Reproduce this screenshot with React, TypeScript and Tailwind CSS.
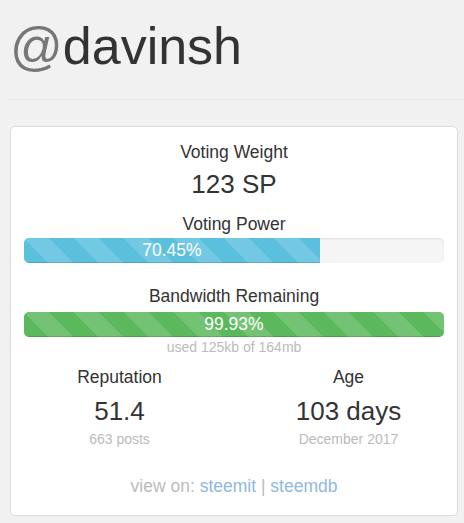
import React from "react";

const stripes =
  "bg-[linear-gradient(45deg,rgba(255,255,255,.15)_25%,transparent_25%,transparent_50%,rgba(255,255,255,.15)_50%,rgba(255,255,255,.15)_75%,transparent_75%,transparent)] bg-[length:50px_50px]";

function ProgressBar({ value, color }: { value: number; color: string }) {
  return (
    <div className="h-[25px] w-full overflow-hidden rounded-[5px] bg-[#f5f5f5] shadow-[inset_0_1px_2px_rgba(0,0,0,0.1)]">
      <div
        className={`h-full text-center text-[17.5px] leading-[25px] text-white shadow-[inset_0_-1px_0_rgba(0,0,0,0.15)] ${color} ${stripes}`}
        style={{ width: `${value}%` }}
      >
        {value.toFixed(2)}%
      </div>
    </div>
  );
}

function Stat({ label, value, note }: { label: string; value: string; note: string }) {
  return (
    <div className="text-center">
      <div className="text-[17.5px] leading-[25px] text-[#333]">{label}</div>
      <div className="mt-[5px] text-[26px] leading-[32px] text-[#333]">{value}</div>
      <div className="mt-[2px] text-[14px] leading-[20px] text-[#bbb]">{note}</div>
    </div>
  );
}

export default function App() {
  return (
    <div className="min-h-[523px] bg-[#f1f1f1] font-['Liberation_Sans',Arial,sans-serif]">
      <div className="ml-[9px] border-b border-[#e6e6e6] pt-[18px] pb-[24px]">
        <h1 className="pl-px text-[52px] leading-[57px] text-[#333]">
          <span className="text-[#777]">@</span>davinsh
        </h1>
      </div>

      <div className="ml-[10px] mt-[26px] w-[448px] rounded-[5px] border border-[#dcdcdc] bg-white px-[13px] pt-[13px] pb-[16px] text-center">
        <div className="text-[17.5px] leading-[25px] text-[#333]">Voting Weight</div>
        <div className="text-[26px] leading-[38px] text-[#333]">123 SP</div>

        <div className="mt-[9px] text-[17.5px] leading-[25px] text-[#333]">Voting Power</div>
        <div className="mt-[1px]">
          <ProgressBar value={70.45} color="bg-[#5bc0de]" />
        </div>

        <div className="mt-[21px] text-[17.5px] leading-[25px] text-[#333]">Bandwidth Remaining</div>
        <div className="mt-[3px]">
          <ProgressBar value={99.93} color="bg-[#5cb85c]" />
        </div>
        <div className="text-[14px] leading-[20px] text-[#bbb]">used 125kb of 164mb</div>

        <div className="-mx-[19px] mt-[8px] grid grid-cols-2">
          <Stat label="Reputation" value="51.4" note="663 posts" />
          <Stat label="Age" value="103 days" note="December 2017" />
        </div>

        <div className="mt-[25px] text-[17.5px] leading-[25px] text-[#bbb]">
          view on: <a className="text-[#8fb9df]">steemit</a> | <a className="text-[#8fb9df]">steemdb</a>
        </div>
      </div>
    </div>
  );
}
